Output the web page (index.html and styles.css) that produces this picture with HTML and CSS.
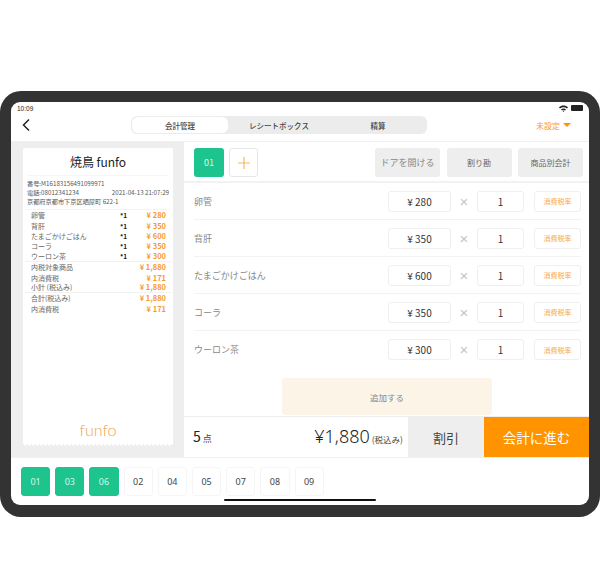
FILE: index.html
```html
<!DOCTYPE html>
<html lang="ja">
<head>
    <meta charset="UTF-8">
    <meta name="viewport" content="width=device-width, initial-scale=1.0">
    <title>funfo</title>
    <link rel="stylesheet" href="styles.css">
</head>
<body>
    <div class="tablet">
        <div class="screen">
            <div class="status">
                <span>10:09</span>
                <span class="status-icons">
                    <svg width="9" height="7" viewBox="0 0 9 7"><path d="M0 2.4C2.6 0 6.4 0 9 2.4L8 3.5C6 1.7 3 1.7 1 3.5ZM2 4.4C3.5 3.1 5.5 3.1 7 4.4L6 5.4C5.1 4.7 3.9 4.7 3 5.4ZM3.7 6.1C4.2 5.7 4.8 5.7 5.3 6.1L4.5 7Z" fill="#222"/></svg>
                    <span class="battery"></span>
                </span>
            </div>
            <div class="header">
                <svg class="back" width="10" height="14" viewBox="0 0 10 14"><path d="M8 1.5L2.5 7L8 12.5" fill="none" stroke="#222" stroke-width="1.5"/></svg>
                <div class="segment">
                    <div class="seg seg-active">会計管理</div>
                    <div class="seg seg-mid">レシートボックス</div>
                    <div class="seg">精算</div>
                </div>
                <div class="unset">未設定<span class="caret"></span></div>
            </div>
            <div class="main">
                <div class="left">
                    <div class="receipt">
                        <div class="shop">焼鳥 funfo</div>
                        <div class="info">
                            <div>番号:M16183156491099971</div>
                            <div class="info-row"><span>電話:08012341234</span><span>2021-04-13 21:07:29</span></div>
                            <div>京都府京都市下京区晒屋町 622-1</div>
                        </div>
                        <div class="lines">
                            <div class="line"><span class="name">卵管</span><span class="count">*1</span><span class="yen">¥ 280</span></div>
                            <div class="line"><span class="name">背肝</span><span class="count">*1</span><span class="yen">¥ 350</span></div>
                            <div class="line"><span class="name">たまごかけごはん</span><span class="count">*1</span><span class="yen">¥ 600</span></div>
                            <div class="line"><span class="name">コーラ</span><span class="count">*1</span><span class="yen">¥ 350</span></div>
                            <div class="line line-end"><span class="name">ウーロン茶</span><span class="count">*1</span><span class="yen">¥ 300</span></div>
                            <div class="line"><span class="name">内税対象商品</span><span class="yen">¥ 1,880</span></div>
                            <div class="line"><span class="name">内消費税</span><span class="yen">¥ 171</span></div>
                            <div class="line line-end"><span class="name">小計 (税込み)</span><span class="yen">¥ 1,880</span></div>
                            <div class="line"><span class="name">合計(税込み)</span><span class="yen">¥ 1,880</span></div>
                            <div class="line"><span class="name">内消費税</span><span class="yen">¥ 171</span></div>
                        </div>
                        <div class="logo">funfo</div>
                    </div>
                </div>
                <div class="right">
                    <div class="toolbar">
                        <div class="tab-on">01</div>
                        <div class="tab-add">
                            <svg width="16" height="16" viewBox="0 0 16 16"><path d="M8 2V14M2 8H14" stroke="#f8b860" stroke-width="1.2" fill="none"/></svg>
                        </div>
                        <div class="tools">
                            <div class="tool tool-small">ドアを開ける</div>
                            <div class="tool">割り勘</div>
                            <div class="tool">商品別会計</div>
                        </div>
                    </div>
                    <div class="items">
                        <div class="item"><span class="item-name">卵管</span><span class="box price">¥ 280</span><span class="times">×</span><span class="box qty">1</span><span class="box tax">消費税率</span></div>
                        <div class="item"><span class="item-name">背肝</span><span class="box price">¥ 350</span><span class="times">×</span><span class="box qty">1</span><span class="box tax">消費税率</span></div>
                        <div class="item"><span class="item-name">たまごかけごはん</span><span class="box price">¥ 600</span><span class="times">×</span><span class="box qty">1</span><span class="box tax">消費税率</span></div>
                        <div class="item"><span class="item-name">コーラ</span><span class="box price">¥ 350</span><span class="times">×</span><span class="box qty">1</span><span class="box tax">消費税率</span></div>
                        <div class="item item-last"><span class="item-name">ウーロン茶</span><span class="box price">¥ 300</span><span class="times">×</span><span class="box qty">1</span><span class="box tax">消費税率</span></div>
                    </div>
                    <div class="add-wrap"><div class="add">追加する</div></div>
                    <div class="total-bar">
                        <div class="points"><b>5</b> 点</div>
                        <div class="total">¥1,880<small>(税込み)</small></div>
                        <div class="discount">割引</div>
                        <div class="pay">会計に進む</div>
                    </div>
                </div>
            </div>
            <div class="tables">
                <div class="table table-on">01</div>
                <div class="table table-on">03</div>
                <div class="table table-on">06</div>
                <div class="table">02</div>
                <div class="table">04</div>
                <div class="table">05</div>
                <div class="table">07</div>
                <div class="table">08</div>
                <div class="table">09</div>
            </div>
            <div class="home"></div>
        </div>
    </div>
</body>
</html>
```

FILE: styles.css
```css
* { box-sizing: border-box; }
body { margin: 0; background: #fff; padding-top: 91px; height: 569px; overflow: hidden; font-family: "Noto Sans CJK JP", "Noto Sans", sans-serif; color: #333; }

.tablet { width: 600px; height: 426px; background: #333; border-radius: 21px; padding: 11px; }
.screen { position: relative; height: 403px; width: 578px; background: #fff; border-radius: 9px; overflow: hidden; display: flex; flex-direction: column; }

.status { height: 12px; padding: 0 6px; display: flex; justify-content: space-between; align-items: center; font-size: 6.5px; color: #222; font-family: "Liberation Sans", sans-serif; }
.status-icons { display: flex; align-items: center; gap: 3px; }
.battery { width: 12px; height: 6px; background: #222; border-radius: 1px; }

.header { height: 28px; display: flex; align-items: flex-start; padding-top: 2px; border-bottom: 1px solid #f0f0f0; }
.back { margin: 2px 0 0 10px; }
.segment { margin-left: 100px; width: 296px; height: 18px; background: #ececec; border-radius: 6px; display: flex; font-size: 7.5px; font-weight: 500; padding: 1px; color: #444; }
.seg { flex: 1; display: flex; align-items: center; justify-content: center; }
.seg-active { flex: 0 0 96px; background: #fff; border-radius: 6px; }
.seg-mid { flex: 0 0 102px; }
.unset { margin-left: 109px; font-size: 8px; color: #ff9a1a; height: 18px; display: flex; align-items: center; gap: 3px; }
.caret { width: 0; height: 0; border: 4px solid transparent; border-top: 4.5px solid #ff9400; border-bottom: 0; }

.main { height: 315px; display: flex; }
.left { width: 173px; background: #eee; padding: 6px 11px 9px 12px; }
.receipt { height: 300px; background: #fff; padding: 0 2px; position: relative; display: flex; flex-direction: column; border-radius: 2px 2px 0 0; }
.receipt::after { content: ""; position: absolute; left: 0; right: 0; bottom: 0; height: 4px; background: linear-gradient(45deg, #eee 50%, transparent 50%) 0 100% / 4px 4px repeat-x, linear-gradient(315deg, #eee 50%, transparent 50%) 0 100% / 4px 4px repeat-x; }
.shop { height: 28px; margin: 0 3px; display: flex; align-items: center; justify-content: center; font-size: 12px; color: #222; border-bottom: 1px solid #f4f4f4; }
.info { font-size: 6.2px; line-height: 9px; padding: 3px 1px 3px 2px; color: #555; border-bottom: 1px solid #f4f4f4; margin-right: 1px; }
.info-row { display: flex; justify-content: space-between; }
.lines { font-size: 7px; color: #666; }
.line { height: 10.4px; display: flex; align-items: center; padding: 0 5px 0 6px; line-height: 10px; }
.line-end { border-bottom: 1px solid #f2f2f2; }
.name { flex: 1; }
.count { width: 8px; font-size: 6.5px; color: #222; font-weight: 700; }
.yen { width: 38px; text-align: right; color: #f79a2c; font-weight: 700; font-size: 7.5px; }
.logo { margin-top: auto; margin-bottom: 7px; text-align: center; font-family: "Lato", sans-serif; font-weight: 300; font-size: 16px; line-height: 22px; color: #eba24f; }

.right { flex: 1; display: flex; flex-direction: column; min-width: 0; }
.toolbar { height: 41px; display: flex; padding: 6px 6px 0 10px; border-bottom: 2px solid #f2f2f2; }
.tab-on { width: 30px; height: 29px; background: #1dc48d; color: #dff7ee; border-radius: 3px; display: flex; align-items: center; justify-content: center; font-size: 9px; }
.tab-add { width: 29px; height: 29px; margin-left: 5px; border: 1px solid #e6e6e6; border-radius: 3px; display: flex; align-items: center; justify-content: center; }
.tools { margin-left: auto; display: flex; gap: 6.5px; }
.tool { width: 65px; height: 29px; background: #eee; border-radius: 3px; display: flex; align-items: center; justify-content: center; font-size: 8px; color: #666; }
.tool-small { font-size: 9px; color: #888; }

.items { padding: 0 8px 0 10px; }
.item { height: 37px; display: flex; align-items: center; border-bottom: 1px solid #f3f3f3; }
.item-last { border-bottom: 0; }
.item-name { width: 194px; font-size: 9px; color: #888; }
.box { height: 21px; border: 1px solid #efefef; border-radius: 3px; display: flex; align-items: center; justify-content: center; }
.price { width: 63px; font-size: 10px; color: #333; }
.times { width: 26px; text-align: center; font-size: 15px; color: #c4c4c4; font-family: "Liberation Sans", sans-serif; }
.qty { width: 47px; font-size: 10px; color: #333; }
.tax { width: 47px; margin-left: 10px; font-size: 7px; color: #f8a647; }

.add-wrap { flex: 1; display: flex; align-items: flex-end; justify-content: center; padding: 0 97px 1px 98px; }
.add { width: 210px; height: 37px; background: #fdf4e8; border-radius: 3px; display: flex; align-items: center; justify-content: center; font-size: 8.5px; color: #888; }

.total-bar { height: 41px; display: flex; align-items: stretch; border-top: 1px solid #eee; }
.points { width: 60px; padding: 11px 0 0 9px; font-size: 9px; line-height: 16px; color: #444; }
.points b { font-size: 14px; font-weight: 400; color: #222; }
.total { width: 164px; display: flex; align-items: baseline; justify-content: flex-end; gap: 2px; padding: 6px 5px 0 0; font-size: 18px; line-height: 26px; color: #222; font-family: "Noto Sans", sans-serif; font-weight: 300; }
.total small { font-size: 8.5px; font-family: "Noto Sans CJK JP", sans-serif; font-weight: 400; color: #444; }
.discount { width: 76px; background: #eee; display: flex; align-items: center; justify-content: center; font-size: 13px; color: #444; }
.pay { width: 105px; background: #ff9400; color: #fff; display: flex; align-items: center; justify-content: center; font-size: 13.5px; }

.tables { height: 48px; display: flex; gap: 5px; padding: 9px 0 0 10px; border-top: 1px solid #f0f0f0; }
.table { width: 29.2px; height: 29px; border: 1px solid #f5f5f5; border-radius: 3px; display: flex; align-items: center; justify-content: center; font-size: 9px; color: #444; font-family: "Noto Sans", sans-serif; }
.table-on { background: #1dc48d; border-color: #1dc48d; color: #d9f5ea; }
.home { position: absolute; left: 213px; bottom: 4px; width: 152px; height: 2px; background: #111; border-radius: 1px; }
```
